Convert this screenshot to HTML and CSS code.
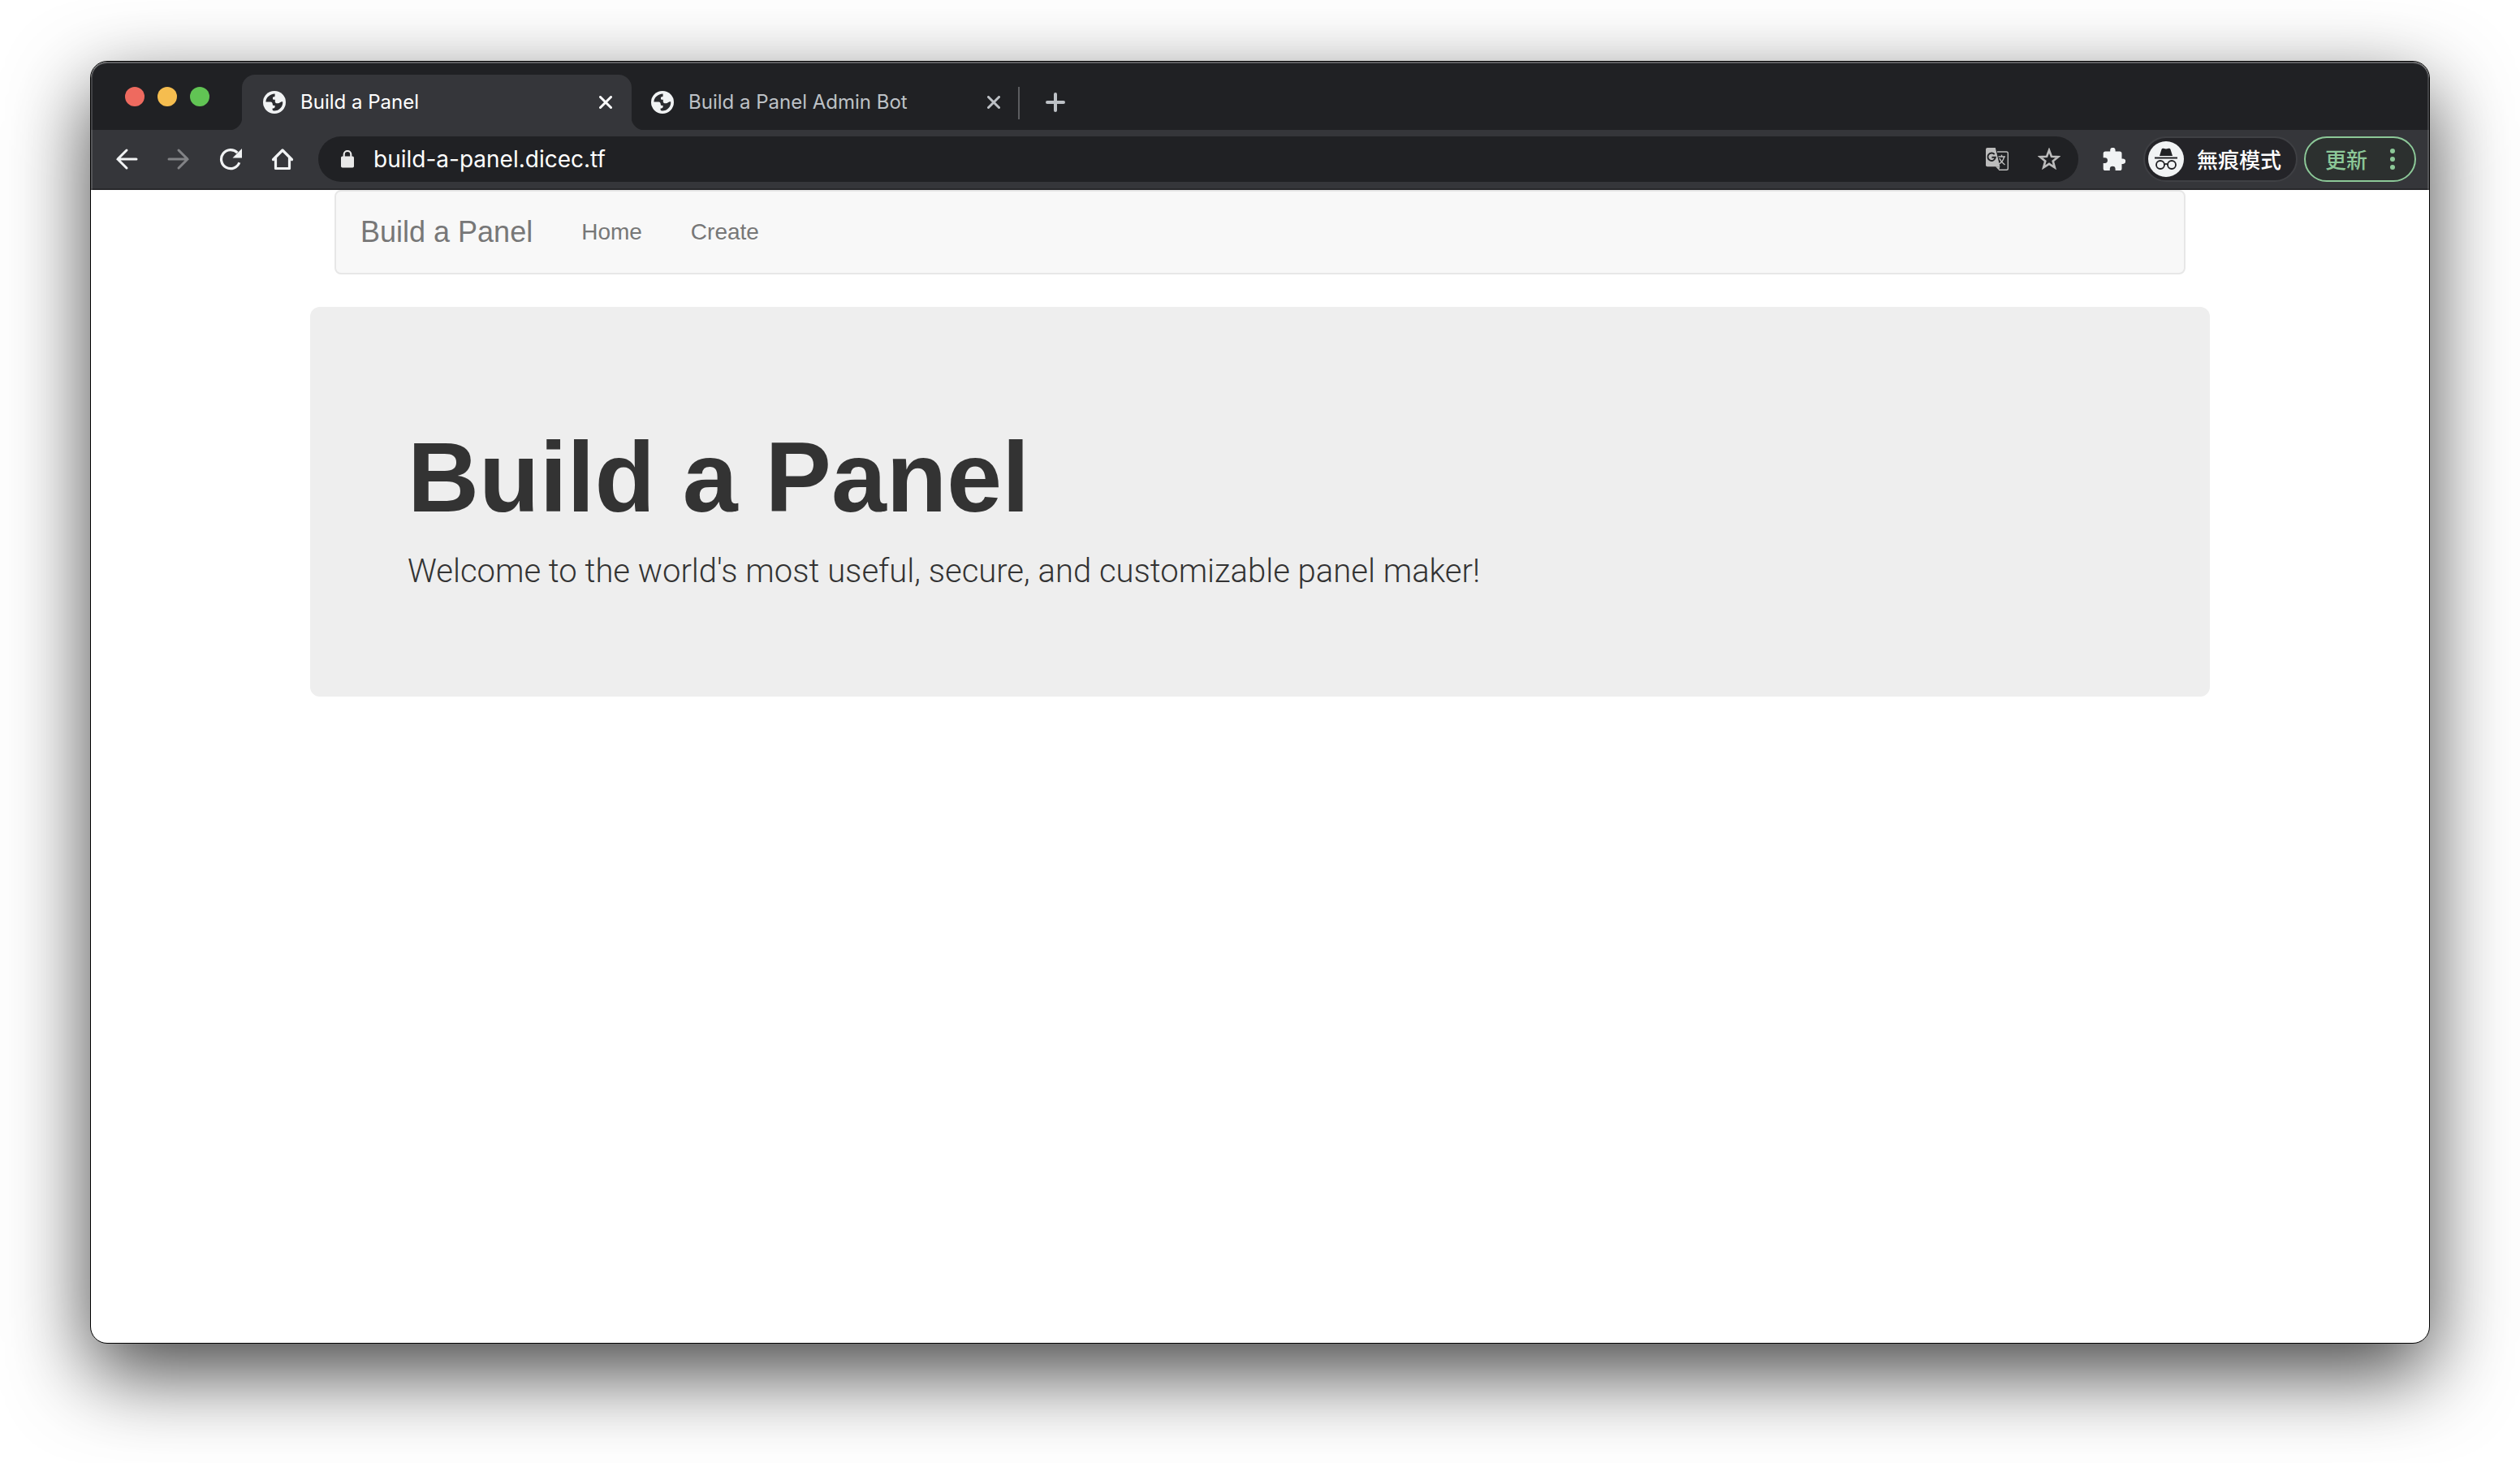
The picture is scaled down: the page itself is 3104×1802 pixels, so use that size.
FILE: index.html
```html
<!DOCTYPE html>
<html lang="en">
<head>
<meta charset="utf-8">
<meta name="viewport" content="width=device-width, initial-scale=1">
<title>Build a Panel</title>
<link rel="stylesheet" href="styles.css">
</head>
<body>
<svg class="sprite" aria-hidden="true">
  <symbol id="globe" viewBox="0 0 28 28">
    <circle cx="14" cy="14" r="14" fill="#f1f3f4"/>
    <path class="globe-sea" d="M3.4 13.5C3.6 8 8 3.8 14.6 3.4V6c0 1.200-.8 1.400-1.800 1.400h-.8v2.200c0 1 .6 1.200 1.600 1.200h1.200v2.600c.4 1.400 1.800 2 3.600 1.800 2-.2 3-1.600 4.400-2h1.400c.6 6-4 11.200-10.700 11.400-1.600 0-2.200-1-1.900-3 1.600 0 3-.6 3-2.100v-1.500h-1.600c-.9 0-1.200-.5-1.200-1.400 0-1.600-.8-3.100-2.400-3.100z"/>
  </symbol>
  <symbol id="close" viewBox="0 0 16 16">
    <path d="M1.500 1.500l13 13M14.500 1.500l-13 13" fill="none" stroke="currentColor" stroke-width="3" stroke-linecap="round"/>
  </symbol>
</svg>
<div class="window">
  <header class="chrome">
    <div class="tab-strip">
      <div class="lights">
        <button class="light light-close" aria-label="Close window"></button>
        <button class="light light-minimize" aria-label="Minimize window"></button>
        <button class="light light-zoom" aria-label="Zoom window"></button>
      </div>
      <div class="tab tab-active">
        <svg class="favicon"><use href="#globe"/></svg>
        <span class="tab-title">Build a Panel</span>
        <button class="tab-close" aria-label="Close tab"><svg><use href="#close"/></svg></button>
      </div>
      <div class="tab">
        <svg class="favicon"><use href="#globe"/></svg>
        <span class="tab-title">Build a Panel Admin Bot</span>
        <button class="tab-close" aria-label="Close tab"><svg><use href="#close"/></svg></button>
      </div>
      <span class="tab-divider"></span>
      <button class="new-tab" aria-label="New tab">
        <svg viewBox="0 0 24 24"><path d="M12 2v20M2 12h20" fill="none" stroke="currentColor" stroke-width="4" stroke-linecap="round"/></svg>
      </button>
    </div>
    <div class="toolbar">
      <button class="tool" aria-label="Back">
        <svg viewBox="0 0 28 28"><path d="M26 14H3M14 3L3 14l11 11" fill="none" stroke="currentColor" stroke-width="3" stroke-linecap="round" stroke-linejoin="miter"/></svg>
      </button>
      <button class="tool tool-off" aria-label="Forward">
        <svg viewBox="0 0 28 28"><path d="M2 14h23M14 3l11 11-11 11" fill="none" stroke="currentColor" stroke-width="3" stroke-linecap="round"/></svg>
      </button>
      <button class="tool" aria-label="Reload">
        <svg viewBox="0 0 28 28"><path d="M24.800 18.200A11.500 11.500 0 1 1 22.400 6.200" fill="none" stroke="currentColor" stroke-width="3.200"/><path d="M28 1v11.500H16.500z" fill="currentColor"/></svg>
      </button>
      <button class="tool" aria-label="Home">
        <svg viewBox="0 0 28 28"><path d="M2.500 14.500L14 3l11.500 11.500M5.500 12.500v13h17v-13" fill="none" stroke="currentColor" stroke-width="3.200" stroke-linecap="round" stroke-linejoin="round"/></svg>
      </button>
      <div class="omnibox">
        <svg class="lock" viewBox="0 0 16 22"><path d="M3.700 9V5.300a4.300 4.300 0 0 1 8.600 0V9" fill="none" stroke="currentColor" stroke-width="2.200"/><rect y="7.500" width="16" height="14" rx="1.800" fill="currentColor"/></svg>
        <input class="url" type="text" value="build-a-panel.dicec.tf" aria-label="Address" spellcheck="false">
        <button class="tool tool-dim" aria-label="Translate this page">
          <svg viewBox="0 0 28 28">
            <path d="M14 5h11.500A1.800 1.800 0 0 1 27.300 6.800v18.700a1.800 1.800 0 0 1-1.800 1.800H16" fill="none" stroke="currentColor" stroke-width="1.400"/>
            <path d="M2 0h9.800l5.600 23.200H2a2 2 0 0 1-2-2V2a2 2 0 0 1 2-2z" fill="currentColor"/>
            <path d="M12 23.200h5.400L16.200 27.500z" fill="currentColor"/>
            <path d="M15.500 11h8.500M19.500 8.800V11M22.500 11.300c-.8 4-3.300 7-6.500 8.800M16.800 13c1.300 3 4 6 6.700 8" fill="none" stroke="currentColor" stroke-width="1.500"/>
            <path d="M10.700 8.200A4.700 4.700 0 1 0 11.800 11.800H7.400" fill="none" stroke="#202124" stroke-width="1.900"/>
          </svg>
        </button>
        <button class="tool tool-dim" aria-label="Bookmark this tab">
          <svg viewBox="0 0 28 28"><path d="M14 3l2.900 7.800 8.300.4-6.500 5.200 2.200 8L14 19.900l-6.900 4.500 2.200-8-6.500-5.200 8.300-.4z" fill="none" stroke="currentColor" stroke-width="2.600"/></svg>
        </button>
      </div>
      <button class="tool" aria-label="Extensions">
        <svg viewBox="0 0 28 28"><path d="M25 13.500h-1.500V7.200a2.600 2.600 0 0 0-2.600-2.600h-5.300V3a3.200 3.200 0 0 0-6.400 0v1.600H3.300A2.600 2.600 0 0 0 .7 7.200v5h1.900a3.400 3.400 0 0 1 0 6.800H.7v6.400A2.600 2.600 0 0 0 3.300 28h5.500v-1.900a3.400 3.400 0 0 1 6.800 0V28h5.300a2.600 2.600 0 0 0 2.600-2.600v-5.500H25a3.200 3.200 0 0 0 0-6.400z" fill="currentColor"/></svg>
      </button>
      <div class="pills">
        <button class="pill pill-incognito">
          <svg class="avatar" viewBox="0 0 44 44">
            <circle cx="22" cy="22" r="22" fill="#f1f3f4"/>
            <path d="M14 18l2.500-8q.6-1.600 2.300-1.200l3.200.8 3.200-.8q1.700-.4 2.300 1.200L30 18z" fill="#202124"/>
            <path d="M8 20.500h28" stroke="#202124" stroke-width="1.800"/>
            <g fill="none" stroke="#202124" stroke-width="1.800"><circle cx="15" cy="29" r="5"/><circle cx="29" cy="29" r="5"/><path d="M20 28.500q2-1.200 4 0"/></g>
          </svg>
          <span>無痕模式</span>
        </button>
        <button class="pill pill-update">
          <span>更新</span>
          <svg class="dots" viewBox="0 0 6 26" fill="currentColor"><circle cx="3" cy="3" r="3"/><circle cx="3" cy="13" r="3"/><circle cx="3" cy="23" r="3"/></svg>
        </button>
      </div>
    </div>
  </header>
  <main class="page">
    <div class="container">
      <nav class="navbar">
        <a class="brand" href="#">Build a Panel</a>
        <a class="nav-link" href="#">Home</a>
        <a class="nav-link" href="#">Create</a>
      </nav>
      <section class="jumbotron">
        <h1>Build a Panel</h1>
        <p>Welcome to the world's most useful, secure, and customizable panel maker!</p>
      </section>
    </div>
  </main>
</div>
</body>
</html>
```
FILE: styles.css
```css
* {
  box-sizing: border-box;
}

body {
  display: flex;
  min-height: 100vh;
  margin: 0;
  padding: 75px 111px 147px;
  background: #fff;
  font-family: Inter, "Noto Sans CJK TC", sans-serif;
}

button {
  display: flex;
  align-items: center;
  flex: none;
  margin: 0;
  padding: 0;
  border: 0;
  background: none;
  color: inherit;
  font: inherit;
}

svg {
  display: block;
  flex: none;
}

.sprite {
  position: absolute;
  width: 0;
  height: 0;
}

.window {
  display: flex;
  flex: 1;
  flex-direction: column;
  min-width: 0;
  overflow: hidden;
  border: 1px solid #000;
  border-radius: 21px;
  background: #fff;
  box-shadow: 0 36px 100px rgba(0, 0, 0, .73);
}

/* Browser frame */
.chrome {
  position: relative;
  color: #f1f3f4;
}

.chrome::after {
  content: "";
  position: absolute;
  inset: 0;
  border-radius: 20px 20px 0 0;
  box-shadow: inset 0 2px 0 rgba(255, 255, 255, .28), inset 2px 0 0 rgba(255, 255, 255, .16), inset -2px 0 0 rgba(255, 255, 255, .16);
  pointer-events: none;
}

.tab-strip {
  display: flex;
  align-items: flex-end;
  height: 84px;
  background: #202124;
}

.lights {
  display: flex;
  align-items: center;
  gap: 16px;
  width: 186px;
  height: 82px;
  padding-left: 42px;
}

.light {
  width: 24px;
  height: 24px;
  border-radius: 50%;
}

.light-close { background: #ee6a5f; }
.light-minimize { background: #f5bd4f; }
.light-zoom { background: #61c454; }

.tab {
  display: flex;
  align-items: center;
  gap: 18px;
  flex: 0 1 480px;
  height: 68px;
  padding: 0 24px 0 26px;
  color: #bdc1c6;
}

.tab + .tab {
  margin-left: -2px;
}

.tab-active {
  position: relative;
  border-radius: 16px 16px 0 0;
  background: #35363a;
  color: #fff;
}

.tab-active::before,
.tab-active::after {
  content: "";
  position: absolute;
  bottom: 0;
  width: 16px;
  height: 16px;
}

.tab-active::before {
  right: 100%;
  background: radial-gradient(circle at 0 0, #202124 16px, #35363a 17px);
}

.tab-active::after {
  left: 100%;
  background: radial-gradient(circle at 100% 0, #202124 16px, #35363a 17px);
}

.favicon {
  width: 28px;
  height: 28px;
}

.globe-sea {
  fill: #2b2c30;
}

.tab-title {
  flex: 1;
  overflow: hidden;
  font-size: 24px;
  line-height: 32px;
  white-space: nowrap;
}

.tab-close svg {
  width: 16px;
  height: 16px;
}

.tab-divider {
  width: 2px;
  height: 40px;
  margin: 0 32px 13px -2px;
  background: #5c5d60;
}

.new-tab {
  height: 68px;
  color: #bdc1c6;
}

.new-tab svg {
  width: 24px;
  height: 24px;
}

.toolbar {
  display: flex;
  align-items: center;
  gap: 36px;
  height: 74px;
  padding: 0 16px 0 30px;
  border-bottom: 2px solid #28282b;
  background: #35363a;
}

.tool svg {
  width: 28px;
  height: 28px;
}

.tool-off {
  color: #828386;
}

.tool-dim {
  color: #bcbcbc;
}

.omnibox {
  display: flex;
  align-items: center;
  gap: 36px;
  flex: 1;
  height: 56px;
  margin: 0 -6px;
  padding: 0 22px 0 28px;
  border-radius: 28px;
  background: #202124;
}

.lock {
  width: 16px;
  height: 22px;
  margin-right: -12px;
  color: #e8e8e8;
}

.url {
  flex: 1;
  min-width: 0;
  padding: 0;
  border: 0;
  outline: 0;
  background: none;
  color: #fff;
  font: 28px/40px Inter, sans-serif;
}

.pills {
  display: flex;
  gap: 8px;
  margin-left: -14px;
}

.pill {
  height: 56px;
  border: 2px solid;
  border-radius: 28px;
  font: 500 26px/40px "Noto Sans CJK TC", sans-serif;
}

.pill-incognito {
  gap: 16px;
  padding: 0 18px 0 4px;
  border-color: #3f4044;
  background: #242428;
  color: #fff;
}

.avatar {
  width: 44px;
  height: 44px;
}

.pill-update {
  gap: 28px;
  padding: 0 24px;
  border-color: #8cc898;
  background: #2c302f;
  color: #8cc898;
}

.dots {
  width: 6px;
  height: 26px;
}

/* Site */
.page {
  flex: 1;
  color: #333;
}

.container {
  max-width: 2340px;
  margin: 0 auto;
}

.navbar {
  display: flex;
  margin: 0 30px 40px;
  border: 2px solid #e7e7e7;
  border-radius: 8px;
  background: #f8f8f8;
}

.brand,
.nav-link {
  padding: 30px;
  color: #777;
  font: 28px/40px "Liberation Sans", sans-serif;
  text-decoration: none;
}

.brand {
  font-size: 36px;
}

.jumbotron {
  padding: 96px 120px;
  border-radius: 12px;
  background: #eee;
}

.jumbotron h1 {
  margin: 40px 0 12px;
  font: bold 122px/148px "Liberation Sans", sans-serif;
}

.jumbotron p {
  margin: 0 0 28px;
  font: 300 40px/60px Roboto, sans-serif;
}
```
